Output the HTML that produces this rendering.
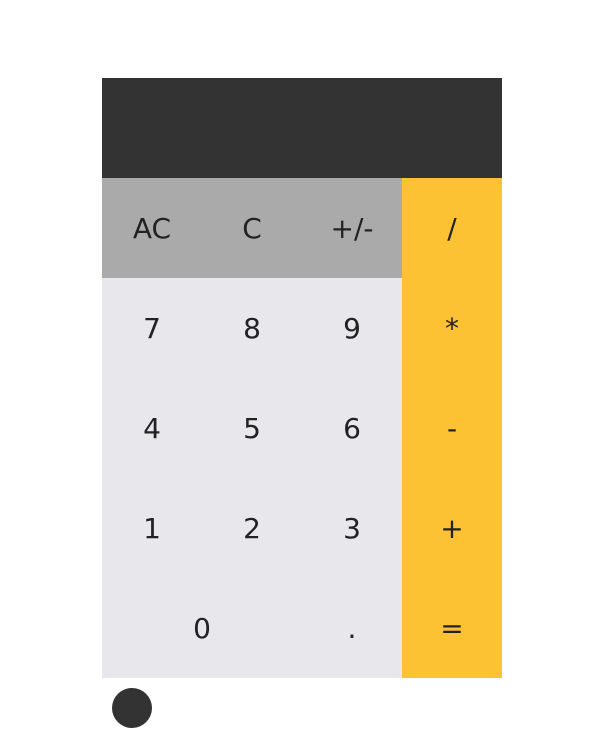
<!DOCTYPE html>
<html><head><style>
body{margin:0;width:598px;height:747px;background:#fff;position:relative;font-family:"DejaVu Sans","Liberation Sans",sans-serif;}
.calc{position:absolute;left:102px;top:78px;width:400px;}
.disp{height:100px;background:#333;}
.row{display:flex;height:100px;}
.b{width:100px;height:100px;display:flex;align-items:center;justify-content:center;font-size:28px;color:#222;background:#e8e8ec;}
.g{background:#aaa;}
.o{background:#fdc134;}
.w{width:200px;}
.dot{position:absolute;left:112px;top:688px;width:40px;height:40px;border-radius:50%;background:#333;}
</style></head><body>
<div class="calc">
<div class="disp"></div>
<div class="row"><div class="b g">AC</div><div class="b g">C</div><div class="b g">+/-</div><div class="b o">/</div></div>
<div class="row"><div class="b">7</div><div class="b">8</div><div class="b">9</div><div class="b o">*</div></div>
<div class="row"><div class="b">4</div><div class="b">5</div><div class="b">6</div><div class="b o">-</div></div>
<div class="row"><div class="b">1</div><div class="b">2</div><div class="b">3</div><div class="b o">+</div></div>
<div class="row"><div class="b w">0</div><div class="b">.</div><div class="b o">=</div></div>
</div>
<div class="dot"></div>
</body></html>
